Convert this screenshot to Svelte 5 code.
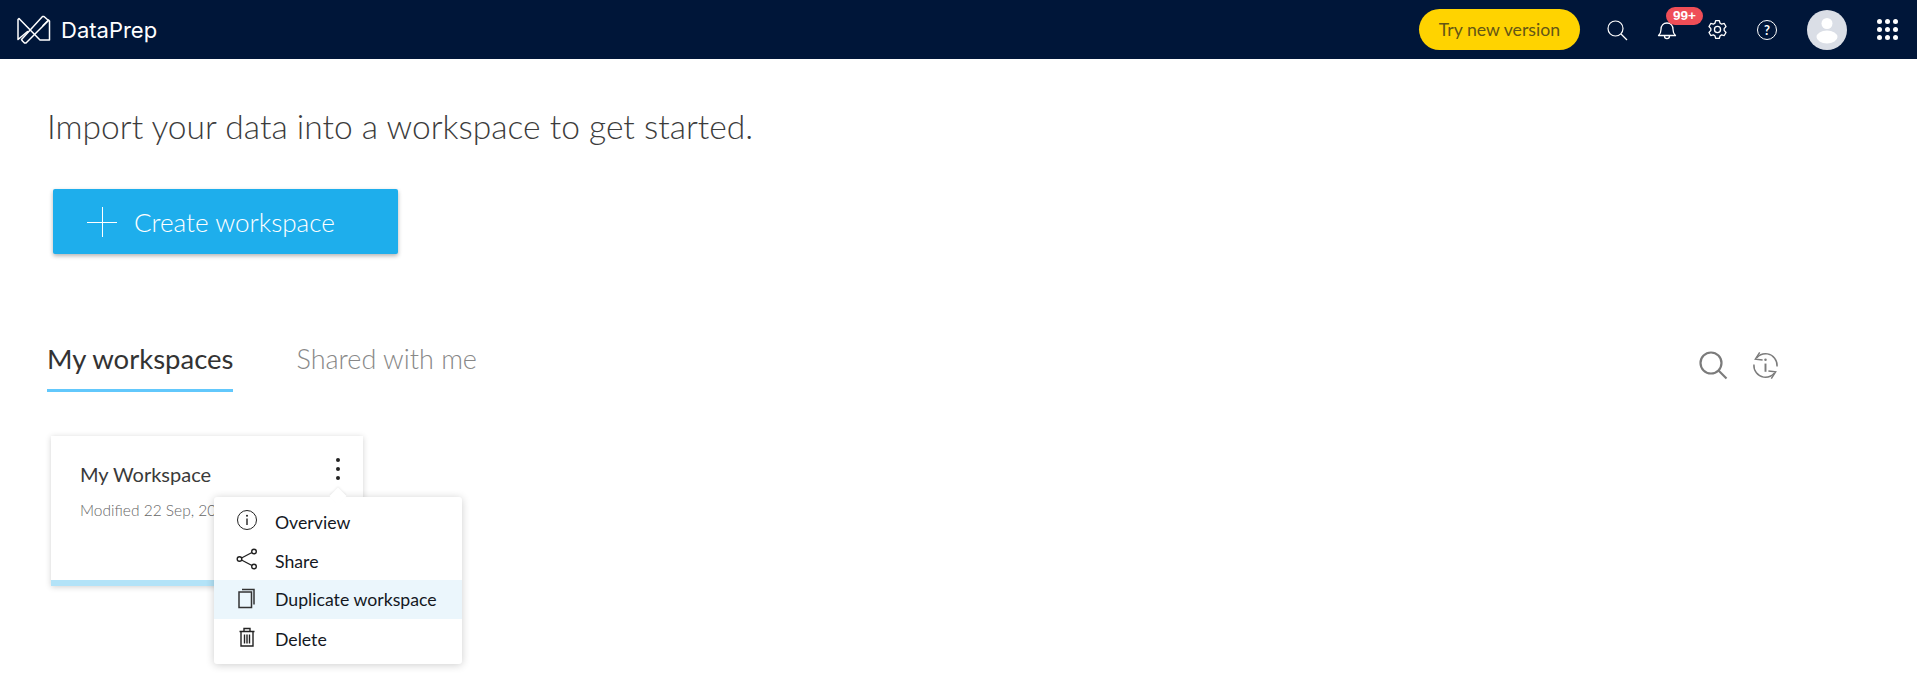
<script>
  const items = [
    { label: 'Overview', icon: 'info' },
    { label: 'Share', icon: 'share' },
    { label: 'Duplicate workspace', icon: 'copy', active: true },
    { label: 'Delete', icon: 'trash' }
  ];
</script>

<div class="page">
  <header class="topbar">
    <div class="brand">
      <svg class="logo" viewBox="0 0 34 29" fill="none" stroke="#fff" stroke-width="1.500" stroke-linejoin="round" stroke-linecap="round">
        <path d="M10.500 16.500 1 24.500V4.500L2 3.500 22 24 23 25H32.500V6L31.500 5 26 10.500" />
        <path d="M4.500 24.500 25.500 1.500 27 1.500 31.500 5.500 9 28 7.500 28 5.500 26 z" />
      </svg>
      <span class="brand-name">DataPrep</span>
    </div>
    <div class="top-actions">
      <button class="try">Try new version</button>
      <svg class="ic search" viewBox="0 0 22 22" fill="none" stroke="#fff" stroke-width="1.2"><circle cx="9.500" cy="9.500" r="7.500"/><path d="M15 15l6 6"/></svg>
      <div class="bell">
        <svg class="ic" viewBox="0 0 22 22" fill="none" stroke="#fff" stroke-width="1.300" stroke-linejoin="round"><path d="M2.500 16.500c1.800-1.500 2.500-3 2.500-6 0-4 2.500-6.500 6-6.500s6 2.500 6 6.500c0 3 .7 4.500 2.500 6z"/><path d="M8.500 17c0 3.500 5 3.500 5 0"/></svg>
        <span class="badge">99+</span>
      </div>
      <svg class="ic gear" viewBox="0 0 24 24" fill="none" stroke="#fff" stroke-width="1.500" stroke-linejoin="round"><circle cx="12" cy="12" r="3.500"/><path d="M10 1.800h4l1 3 1.700 1 3-.7 2 3.500-2.100 2.400v2l2.100 2.400-2 3.500-3-.7-1.700 1-1 3h-4l-1-3-1.700-1-3 .7-2-3.500L4.400 13v-2L2.300 8.600l2-3.500 3 .7 1.700-1z"/></svg>
      <div class="help">?</div>
      <div class="avatar">
        <svg viewBox="0 0 40 40"><circle cx="20" cy="13.500" r="5.500" fill="#fff"/><ellipse cx="20" cy="27" rx="10.500" ry="6.500" fill="#fff"/></svg>
      </div>
      <div class="apps">
        {#each Array(9) as _}<i></i>{/each}
      </div>
    </div>
  </header>

  <main class="content">
    <h1>Import your data into a workspace to get started.</h1>
    <button class="create">
      <svg viewBox="0 0 30 30" stroke="#fff" stroke-width="1"><path d="M15.500 0v30M0 15.500h30"/></svg>
      Create workspace
    </button>

    <div class="tabbar">
      <div class="tabs">
        <span class="tab active">My workspaces</span>
        <span class="tab">Shared with me</span>
      </div>
      <div class="tools">
        <svg class="t1" viewBox="0 0 30 30" fill="none" stroke="#7b7b7b" stroke-width="2.200"><circle cx="13" cy="13" r="10.500"/><path d="M20.500 20.500l8 8"/></svg>
        <svg class="t2" viewBox="0 0 30 30" fill="none" stroke="#7b7b7b" stroke-width="1.500"><path d="M6 7C9 3.500 13 2.500 17 3c6 1 10.500 6.500 10 13"/><path d="M24 23c-3 3.500-7 4.500-11 4-6-1-10.500-6.500-10-13"/><path d="M9 1.500 4.500 8.500l7.500.8M21 28.500l4.500-7-7.500-.8"/><path d="M15 13v8.500" stroke-width="2"/><circle cx="15" cy="9" r="1.300" fill="#7b7b7b" stroke="none"/></svg>
      </div>
    </div>

    <div class="card">
      <div class="card-title">My Workspace</div>
      <div class="card-meta">Modified 22 Sep, 2022</div>
      <div class="kebab"><i></i><i></i><i></i></div>
      <div class="menu">
        <span class="caret"></span>
        {#each items as it}
          <div class="item" class:active={it.active}>
            <span class="mi">
              {#if it.icon === 'info'}
                <svg viewBox="0 0 22 22" fill="none" stroke="#222" stroke-width="1"><circle cx="11" cy="11" r="9.500"/><path d="M11 9.500v6.500" stroke-width="1.400"/><circle cx="11" cy="6.800" r="1" fill="#222" stroke="none"/></svg>
              {:else if it.icon === 'share'}
                <svg viewBox="0 0 22 22" fill="none" stroke="#222" stroke-width="1.400"><circle cx="3.500" cy="11" r="2.300"/><circle cx="18" cy="3.500" r="2.300"/><circle cx="18" cy="18.500" r="2.300"/><path d="M5.500 10 16 4.500M5.500 12 16 17.500"/></svg>
              {:else if it.icon === 'copy'}
                <svg viewBox="0 0 22 22" fill="none" stroke="#333" stroke-width="1.500"><rect x="3" y="5" width="12.500" height="15.500"/><path d="M6 2.500h12v15"/></svg>
              {:else}
                <svg viewBox="0 0 22 22" fill="none" stroke="#222" stroke-width="1.400"><path d="M3.500 5.500h15M5 5.500v14.500h12V5.500M8 5V2.500h6V5"/><path d="M8.500 8.500v9M11 8.500v9M13.500 8.500v9"/></svg>
              {/if}
            </span>
            <span class="label">{it.label}</span>
          </div>
        {/each}
      </div>
    </div>
  </main>
</div>

<style>
  :global(body) { margin: 0; background: #fff; font-family: Lato, "Liberation Sans", sans-serif; }
  .page { height: 685px; overflow: hidden; }
  .topbar {
    height: 59px; background: #001639; display: flex; align-items: center;
    justify-content: space-between; padding: 0 19px 0 17px; box-sizing: border-box;
  }
  .brand { display: flex; align-items: center; gap: 10px; }
  .logo { width: 34px; height: 29px; }
  .brand-name { font-family: Inter, sans-serif; color: #fff; font-size: 22px; }
  .top-actions { display: flex; align-items: center; }
  .try {
    width: 161px; height: 41px; border: 0; border-radius: 21px; background: #ffd300;
    color: #645616; font: 400 17.700px Lato, sans-serif; padding: 0; margin-right: 26px;
  }
  .ic { width: 22px; height: 22px; display: block; }
  .search { margin-right: 28px; }
  .bell { position: relative; width: 22px; margin-right: 29px; }
  .badge {
    position: absolute; left: 10px; top: -12px; width: 37px; height: 18px; border-radius: 9px;
    background: #ef4e57; color: #fff; font: 700 13.500px/17px "Liberation Sans", sans-serif; text-align: center;
  }
  .gear { width: 21px; height: 21px; margin-right: 29px; }
  .help {
    width: 18px; height: 18px; border: 1.300px solid #fff; border-radius: 50%; color: #fff;
    font: 700 13px/18px Lato, sans-serif; text-align: center; margin-right: 30px;
  }
  .avatar { width: 40px; height: 40px; border-radius: 50%; background: #dadee6; overflow: hidden; margin-right: 30px; }
  .avatar svg { width: 40px; height: 40px; display: block; }
  .apps { display: grid; grid-template-columns: repeat(3, 5px); gap: 3px; }
  .apps i { width: 5px; height: 5px; border-radius: 50%; background: #fff; }

  .content { padding: 44px 0 0 47px; position: relative; }
  h1 { margin: 0; font-weight: 300; font-size: 33.600px; line-height: 46px; color: #3c3c3c; }
  .create {
    display: flex; align-items: center; margin: 40px 0 0 6px; width: 345px; height: 65px;
    border: 0; border-radius: 2px; background: #1eaeec; color: #fff; padding: 0 0 0 34px;
    font: 300 26.100px Lato, sans-serif; gap: 17px;
    box-shadow: 0 2px 4px rgba(0, 0, 0, .3);
  }
  .create svg { width: 30px; height: 30px; }
  .tabbar { display: flex; justify-content: space-between; align-items: flex-start; margin-top: 85px; padding-right: 137px; }
  .tabs { display: flex; gap: 63px; }
  .tab { font-weight: 300; font-size: 27px; line-height: 40px; color: #888; height: 53px; box-sizing: border-box; }
  .tab.active { font-weight: 400; font-size: 27.500px; color: #333; border-bottom: 3px solid #62c8fc; }
  .tools { display: flex; align-items: center; gap: 23px; padding-top: 11px; }
  .t1 { width: 30px; height: 30px; }
  .t2 { width: 29px; height: 29px; }

  .card {
    position: relative; width: 312px; height: 150px; margin: 44px 0 0 4px; box-sizing: border-box;
    background: #fff; border-bottom: 6px solid #b3e3f8; padding: 24px 0 0 29px;
    box-shadow: 0 1px 6px rgba(0, 0, 0, .18);
  }
  .card-title { font-size: 20px; line-height: 28px; color: #3a3a3a; }
  .card-meta { font-weight: 300; font-size: 15.500px; line-height: 20px; color: #666; margin-top: 12px; white-space: nowrap; }
  .kebab { position: absolute; right: 23px; top: 22px; display: grid; gap: 5px; }
  .kebab i { width: 4px; height: 4px; border-radius: 50%; background: #222; }
  .menu {
    position: absolute; left: 163px; top: 61px; width: 248px; height: 167px; box-sizing: border-box;
    background: #fff; border-radius: 3px; padding: 5px 0;
    box-shadow: 0 1px 8px rgba(0, 0, 0, .2);
  }
  .caret {
    position: absolute; left: 118px; top: -7px; width: 12px; height: 12px; background: #fff;
    transform: rotate(45deg); box-shadow: -1px -1px 2px rgba(0, 0, 0, .06);
  }
  .item {
    position: relative; height: 39px; display: flex; align-items: center; padding-left: 61px;
    font-size: 17.700px; color: #14181f;
  }
  .item .label { position: relative; top: 1px; }
  .item.active .label { top: 0; }
  .item.active { background: #ebf6fc; }
  .mi { position: absolute; left: 22px; top: 7px; width: 22px; height: 22px; }
  .mi svg { width: 22px; height: 22px; display: block; }
</style>
